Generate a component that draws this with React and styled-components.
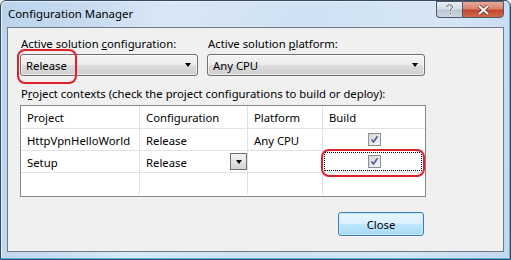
import React from 'react';
import styled, { createGlobalStyle, css } from 'styled-components';

const GlobalStyle = createGlobalStyle`
  html, body {
    margin: 0;
    padding: 0;
    background: #ffffff;
  }
  body {
    font-family: "Noto Sans", "Open Sans", sans-serif;
    font-size: 11.3px;
    color: #000;
  }
`;

const Window = styled.div`
  position: relative;
  width: 511px;
  height: 260px;
  box-sizing: border-box;
  border: 1px solid #34495e;
  border-radius: 6px 6px 0 0;
  background: linear-gradient(100deg, #bad3ec 0%, #c9dcf0 18%, #d9e8f7 30%, #cfe1f3 55%, #d6e6f6 80%, #c2d8ee 100%);
  box-shadow: inset -1px -1px 0 #4fb8ea, inset 1px 1px 0 #e8f1fa;
  display: flex;
  flex-direction: column;
`;

const TitleBar = styled.div`
  height: 26px;
  display: flex;
  align-items: flex-start;
  justify-content: space-between;
  padding: 0 6px 0 7px;
`;

const Title = styled.div`
  font-size: 11.4px;
  line-height: 16px;
  margin-top: 5px;
  color: #000;
`;

const CaptionButtons = styled.div`
  display: flex;
`;

const CaptionButton = styled.div`
  height: 17px;
  box-sizing: border-box;
  display: flex;
  align-items: center;
  justify-content: center;
  border: 1px solid #4d5968;
  ${p => p.$close ? css`
    width: 42px;
    border-radius: 0 0 4px 0;
    background: linear-gradient(#e9a99c 0%, #d9826f 45%, #c4452c 55%, #d26a4c 100%);
  ` : css`
    width: 26px;
    border-right: none;
    border-radius: 0 0 0 4px;
    background: linear-gradient(#e8eef5 0%, #d4dde8 45%, #bac6d3 55%, #cbd6e2 100%);
  `}
`;

const Client = styled.div`
  flex: 1;
  margin: 0 6px 7px 6px;
  border: 1px solid #6e7a86;
  background: #f0f0f0;
  padding: 8px 0 0 12px;
  display: flex;
  flex-direction: column;
`;

const ComboRow = styled.div`
  display: flex;
  gap: 9px;
  width: 406px;
`;

const Field = styled.div`
  display: flex;
  flex-direction: column;
  gap: 2px;
  width: ${p => p.$w}px;
`;

const Label = styled.div`
  line-height: 16px;
  padding-left: 1px;
  white-space: nowrap;
  margin-top: ${p => p.$mt || 0}px;
`;

const Combo = styled.div`
  height: 22px;
  box-sizing: border-box;
  border: 1px solid #707070;
  border-radius: 3px;
  background: linear-gradient(#f4f4f4 0%, #ebebeb 48%, #dddddd 52%, #cfcfcf 100%);
  box-shadow: inset 0 0 0 1px rgba(255,255,255,0.6);
  display: flex;
  align-items: center;
  justify-content: space-between;
  padding: 0 4px 0 5px;
`;

const Arrow = styled.span`
  width: 0;
  height: 0;
  border-left: 3.5px solid transparent;
  border-right: 3.5px solid transparent;
  border-top: 4px solid #000;
  margin-right: ${p => p.$flush ? 0 : 2}px;
`;

const Grid = styled.div`
  margin-top: 3px;
  width: 406px;
  height: 92px;
  box-sizing: border-box;
  border: 1px solid #828790;
  background: #fff;
  display: grid;
  grid-template-columns: 119px 108px 75px 1fr;
  grid-template-rows: 23px 22px 22px 22px;
  align-content: start;
`;

const Cell = styled.div`
  position: relative;
  box-sizing: border-box;
  border-right: ${p => p.$last ? 'none' : '1px solid #e2e2e2'};
  border-bottom: ${p => p.$noBottom ? 'none' : '1px solid #e2e2e2'};
  display: flex;
  align-items: center;
  justify-content: ${p => p.$center ? 'center' : 'flex-start'};
  padding: ${p => p.$center ? '0' : '1px 0 0 6px'};
  white-space: nowrap;
`;

const CellDrop = styled.div`
  position: absolute;
  right: 0;
  top: 2px;
  width: 17px;
  height: 17px;
  box-sizing: border-box;
  border: 1px solid #707070;
  background: linear-gradient(#f2f2f2 0%, #e4e4e4 50%, #d2d2d2 100%);
  display: flex;
  align-items: center;
  justify-content: center;
`;

const CheckBox = styled.div`
  width: 13px;
  height: 13px;
  box-sizing: border-box;
  border: 1px solid #8e8f8f;
  background: linear-gradient(135deg, #d7d7d7, #f4f4f4);
  display: flex;
  align-items: center;
  justify-content: center;
`;

const FocusRect = styled.div`
  position: absolute;
  left: 1px;
  right: 3px;
  top: 1px;
  bottom: 1px;
  border: 1px dotted #000;
`;

const Highlight = styled.div`
  position: absolute;
  border: 2px solid #e0202a;
  border-radius: 8px;
  pointer-events: none;
`;

const Footer = styled.div`
  display: flex;
  justify-content: flex-end;
  width: 404px;
  margin-top: 15px;
`;

const Button = styled.button`
  width: 86px;
  height: 24px;
  font: inherit;
  color: #000;
  border: 1px solid #3c7fb1;
  border-radius: 3px;
  background: linear-gradient(#eaf6fd 0%, #d9f0fc 48%, #bee6fd 52%, #a7d9f5 100%);
  box-shadow: inset 0 0 0 1px #c8eaff;
  padding: 0;
`;

const U = styled.span`
  text-decoration: underline;
`;

function Check() {
  return (
    <CheckBox>
      <svg width="9" height="9" viewBox="0 0 9 9">
        <path d="M1.5 4.5 L3.5 7 L7.5 1.2" fill="none" stroke="#4a5d96" strokeWidth="1.6" />
      </svg>
    </CheckBox>
  );
}

export default function App() {
  return (
    <>
      <GlobalStyle />
      <Window>
        <TitleBar>
          <Title>Configuration Manager</Title>
          <CaptionButtons>
            <CaptionButton>
              <svg width="9" height="11" viewBox="0 0 9 11">
                <path d="M1.5 3 Q1.5 0.8 4.5 0.8 Q7.5 0.8 7.5 3 Q7.5 4.6 5.2 5.4 L5.2 7" fill="none" stroke="#fff" strokeWidth="2.2" />
                <path d="M1.5 3 Q1.5 0.8 4.5 0.8 Q7.5 0.8 7.5 3 Q7.5 4.6 5.2 5.4 L5.2 7" fill="none" stroke="#3f4a58" strokeWidth="1" />
                <rect x="4.2" y="8.3" width="2" height="2" fill="#3f4a58" stroke="#fff" strokeWidth="0.6" />
              </svg>
            </CaptionButton>
            <CaptionButton $close>
              <svg width="13" height="10" viewBox="0 0 13 10">
                <path d="M2 1 L11 9 M11 1 L2 9" stroke="#5b2a22" strokeWidth="3.4" />
                <path d="M2 1 L11 9 M11 1 L2 9" stroke="#fff" strokeWidth="2" />
              </svg>
            </CaptionButton>
          </CaptionButtons>
        </TitleBar>
        <Client>
          <ComboRow>
            <Field $w={178}>
              <Label>Active solution <U>c</U>onfiguration:</Label>
              <Combo>Release<Arrow /></Combo>
            </Field>
            <Field $w={218}>
              <Label>Active solution <U>p</U>latform:</Label>
              <Combo>Any CPU<Arrow /></Combo>
            </Field>
          </ComboRow>
          <Label $mt={10}>P<U>r</U>oject contexts (check the project configurations to build or deploy):</Label>
          <Grid>
            <Cell>Project</Cell>
            <Cell>Configuration</Cell>
            <Cell>Platform</Cell>
            <Cell $last>Build</Cell>

            <Cell>HttpVpnHelloWorld</Cell>
            <Cell>Release</Cell>
            <Cell>Any CPU</Cell>
            <Cell $last $center><Check /></Cell>

            <Cell>Setup</Cell>
            <Cell>Release<CellDrop><Arrow $flush /></CellDrop></Cell>
            <Cell></Cell>
            <Cell $last $center><FocusRect /><Check /></Cell>

            <Cell $noBottom></Cell>
            <Cell $noBottom></Cell>
            <Cell $noBottom></Cell>
            <Cell $last $noBottom></Cell>
          </Grid>
          <Footer>
            <Button>Close</Button>
          </Footer>
        </Client>
        <Highlight style={{ left: 16, top: 48, width: 56, height: 31 }} />
        <Highlight style={{ left: 320, top: 148, width: 100, height: 24 }} />
      </Window>
    </>
  );
}
